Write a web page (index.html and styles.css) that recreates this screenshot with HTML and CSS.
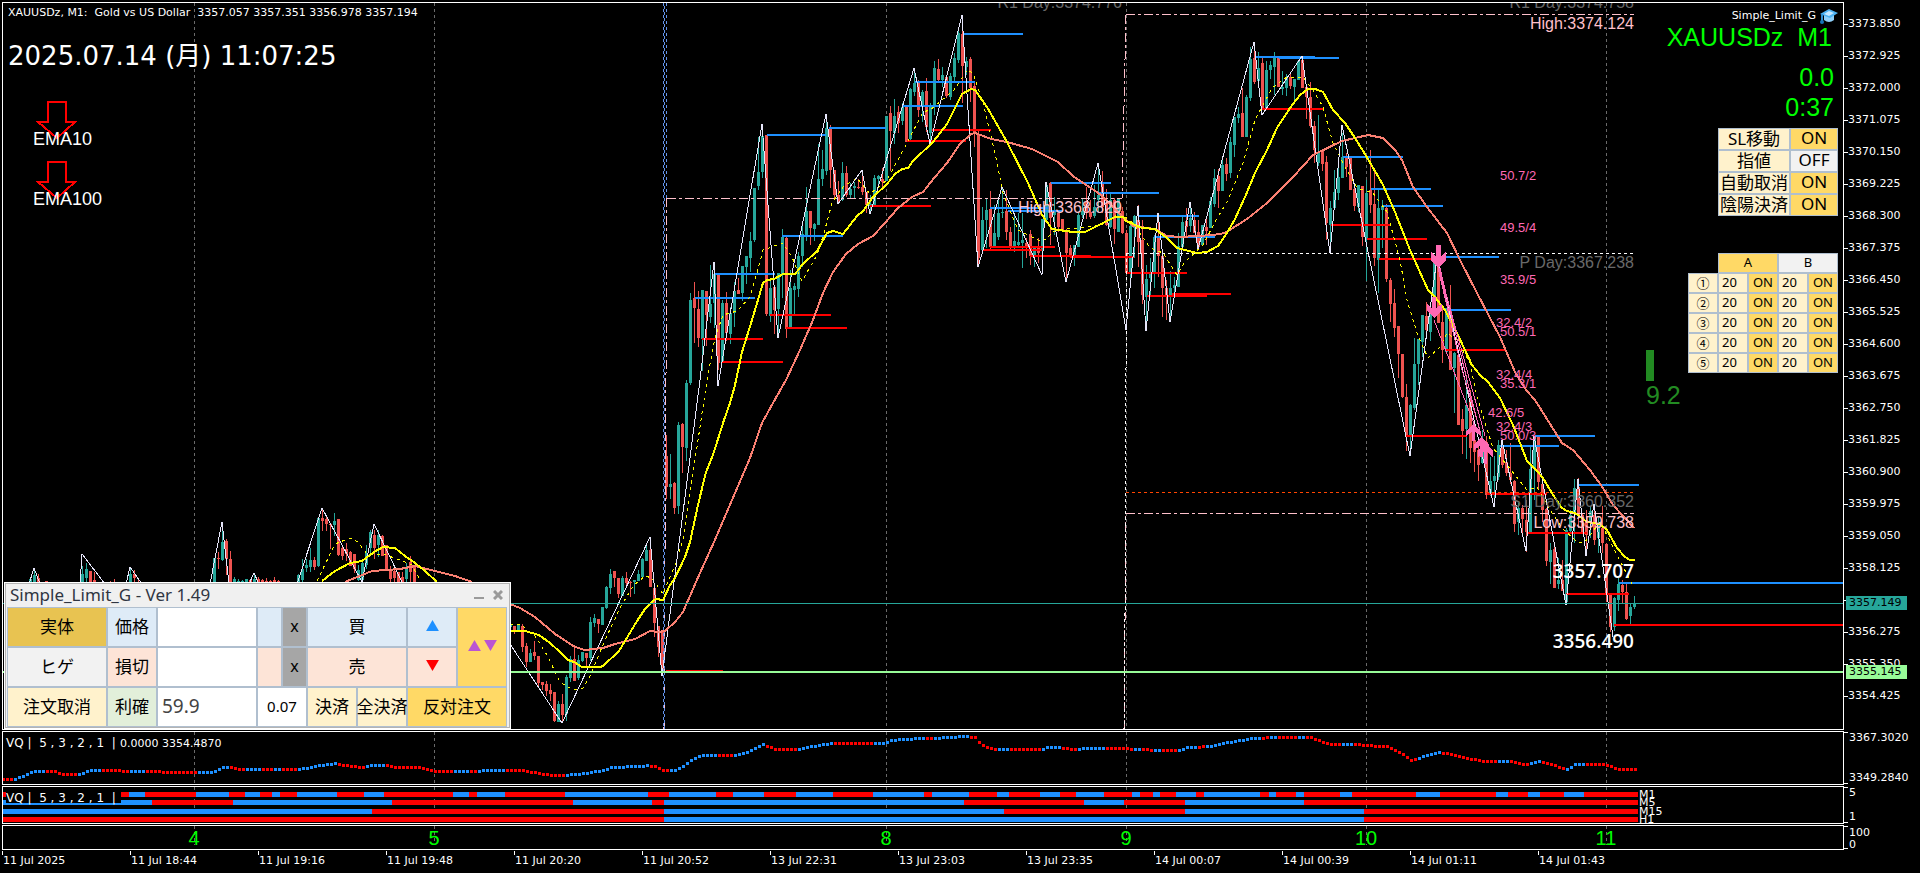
FILE: index.html
```html
<!DOCTYPE html>
<html lang="ja">
<head>
<meta charset="utf-8">
<title>XAUUSDz, M1</title>
<link rel="stylesheet" href="styles.css">
</head>
<body>
<main class="terminal">
  <section class="panel panel-price" aria-label="Price chart">
    <svg class="canvas" aria-hidden="true">
      <g transform="translate(-3 -3)">
        <g id="grid"></g>
        <g id="candles"></g>
        <g id="levels"></g>
        <g class="pivots">
          <path class="pink" d="M1126 14.5H1634M667 198.5H1122L1126 14M667 198L664 729M1126 513.5H1634M1124 729L1126 514"/>
          <path class="white" d="M1126 253.5H1634M1126.5 253L1124.5 729"/>
          <path class="orange" d="M1126 492.5H1634"/>
          <path class="session" d="M663.5 3V729M666.5 3V198"/>
          <path class="session shifted" d="M664.5 3V729"/>
        </g>
        <g id="averages"></g>
        <line class="bid" x1="3" x2="1843" y1="603.5" y2="603.5"/>
        <line class="position" x1="3" x2="1843" y1="672" y2="672"/>
        <g class="trades">
          <path d="M1434 320L1478 434M1439 268L1485 436M1440 268L1451 315L1482 440M1438 268L1462 370L1480 430M1439 268L1449 312"/>
          <path class="mark" d="M1436 245h5v11l5-4v8l-8 8-7-8v-8l5 4zM1432 297h4v11l6-4v6l-8 8-7-8v-6l5 4zM1472 441v-9l-6 4v-5l7-7 8 7v5l-6-4v9zM1480 457v-11l-6 4v-5l7-8 8 8v5l-6-4v11zM1484 464v-12l-6 5v-6l7-9 8 9v6l-6-5v12z"/>
        </g>
        <g class="ema-arrows">
          <path d="M48 101.500H66V122H75L57 138L38 122H48Z"/>
          <path d="M48 161.500H66V182H75L57 198L38 182H48Z"/>
        </g>
        <rect class="spread-bar" x="1646" y="350" width="8" height="31"/>

        <text class="t-small" x="8" y="16" xml:space="preserve">XAUUSDz, M1:  Gold vs US Dollar  3357.057 3357.351 3356.978 3357.194</text>
        <text class="t-clock" x="8" y="65">2025.07.14 (月) 11:07:25</text>
        <text class="t-ema" x="33" y="145">EMA10</text>
        <text class="t-ema" x="33" y="205">EMA100</text>
        <g class="t-pivot">
          <text class="gray" x="1122" y="8">R1 Day:3374.776</text>
          <text class="gray" x="1634" y="8">R1 Day:3374.758</text>
          <text class="pinkish" x="1634" y="29">High:3374.124</text>
          <text class="pinkish" x="1122" y="213">High:3368.829</text>
          <text class="gray" x="1634" y="268">P Day:3367.238</text>
          <text class="gray" x="1634" y="507">S1 Day:3360.352</text>
          <text class="pinkish" x="1634" y="528">Low:3359.738</text>
        </g>
        <g class="t-trade">
          <text x="1500" y="180">50.7/2</text>
          <text x="1500" y="232">49.5/4</text>
          <text x="1500" y="284">35.9/5</text>
          <text x="1496" y="327">32.4/2</text>
          <text x="1500" y="336">50.5/1</text>
          <text x="1496" y="379">32.4/4</text>
          <text x="1500" y="388">35.3/1</text>
          <text x="1488" y="417">42.6/5</text>
          <text x="1496" y="431">32.4/3</text>
          <text x="1500" y="440">50.0/3</text>
        </g>
        <text class="t-price" x="1634" y="578">3357.707</text>
        <text class="t-price" x="1634" y="648">3356.490</text>
        <text class="t-spread" x="1646" y="404">9.2</text>
      </g>
    </svg>

    <aside class="status">
      <p class="expert">Simple_Limit_G
        <svg class="cap" viewBox="0 0 18 15" aria-hidden="true"><path d="M4 6v5q5 4 10 0V6z" fill="#8fd0fa"/><path d="M0 5L9 0l9 4-8 5z" fill="#4db2f2"/><path d="M4 5l5-3 5 2-5 3z" fill="#c5e8ff"/><path d="M2 5v7" stroke="#2f8ed0" stroke-width="2"/><circle cx="2" cy="13" r="2" fill="#1674b8"/></svg>
      </p>
      <p class="symbol">XAUUSDz&nbsp; M1</p>
      <p class="gain">0.0</p>
      <p class="count">0:37</p>
      <div class="switches">
        <button class="cream">SL移動</button><button class="gold">ON</button>
        <button class="cream">指値</button><button class="plain">OFF</button>
        <button class="cream">自動取消</button><button class="gold">ON</button>
        <button class="cream">陰陽決済</button><button class="gold">ON</button>
      </div>
      <div class="slots">
        <button class="gold head-a">A</button><button class="plain head-b">B</button>
        <button class="cream num">①</button><input aria-label="A1" value="20"><button class="gold">ON</button><input aria-label="B1" value="20"><button class="gold">ON</button>
        <button class="cream num">②</button><input aria-label="A2" value="20"><button class="gold">ON</button><input aria-label="B2" value="20"><button class="gold">ON</button>
        <button class="cream num">③</button><input aria-label="A3" value="20"><button class="gold">ON</button><input aria-label="B3" value="20"><button class="gold">ON</button>
        <button class="cream num">④</button><input aria-label="A4" value="20"><button class="gold">ON</button><input aria-label="B4" value="20"><button class="gold">ON</button>
        <button class="cream num">⑤</button><input aria-label="A5" value="20"><button class="gold">ON</button><input aria-label="B5" value="20"><button class="gold">ON</button>
      </div>
    </aside>

    <section class="dialog" aria-label="Simple_Limit_G">
      <header class="dialog-bar">
        <h1>Simple_Limit_G - Ver 1.49</h1>
        <button class="tool" aria-label="Minimize"><svg viewBox="0 0 10 10"><path d="M0 8h10" stroke="#9a9a9a" stroke-width="2"/></svg></button>
        <button class="tool" aria-label="Close"><svg viewBox="0 0 10 10"><path d="M1 1l8 8M9 1l-8 8" stroke="#9a9a9a" stroke-width="3"/></svg></button>
      </header>
      <div class="order">
        <button class="amber">実体</button><button class="sky">価格</button><input aria-label="価格"><button class="sky" aria-label="買オプション"></button><button class="dim">x</button><button class="sky wide">買</button><button class="sky" aria-label="Up"><svg class="tri" viewBox="0 0 14 12"><path d="M7 0l7 12H0z" fill="#1e90ff"/></svg></button><button class="gold both" aria-label="Both"><svg class="tri" viewBox="0 0 14 12"><path d="M7 0l7 12H0z" fill="#ba55d3"/></svg><svg class="tri" viewBox="0 0 14 12"><path d="M0 0h14L7 12z" fill="#ba55d3"/></svg></button>
        <button class="plain">ヒゲ</button><button class="rose">損切</button><input aria-label="損切"><button class="rose" aria-label="売オプション"></button><button class="dim">x</button><button class="rose wide">売</button><button class="rose" aria-label="Down"><svg class="tri" viewBox="0 0 14 12"><path d="M0 0h14L7 12z" fill="#ff0000"/></svg></button>
        <button class="cream">注文取消</button><button class="mint">利確</button><input aria-label="利確" value="59.9"><input class="lot wide" aria-label="Lot" value="0.07"><button class="cream">決済</button><button class="cream">全決済</button><button class="gold wide">反対注文</button>
      </div>
    </section>
  </section>

  <div class="scale scale-price">
    <ol id="prices"></ol>
    <span class="tag tag-bid">3357.149</span>
    <span class="tag tag-position">3355.145</span>
  </div>

  <section class="panel" aria-label="VQ">
    <svg class="canvas" aria-hidden="true">
      <g transform="translate(-3 -732)">
        <g id="grid-vq"></g>
        <g id="dots"></g>
        <text class="t-label" x="6" y="747" xml:space="preserve">VQ |  5 , 3 , 2 , 1  |</text>
        <text class="t-small" x="120" y="747">0.0000 3354.4870</text>
      </g>
    </svg>
  </section>
  <div class="scale ends"><span>3367.3020</span><span>3349.2840</span></div>

  <section class="panel" aria-label="VQ multi timeframe">
    <svg class="canvas" aria-hidden="true">
      <g transform="translate(-3 -787)">
        <g id="grid-mtf"></g>
        <g id="bars"></g>
        <rect x="6" y="788" width="115" height="15" fill="#000"/>
        <text class="t-label" x="6" y="802" xml:space="preserve">VQ |  5 , 3 , 2 , 1  |</text>
        <g class="t-small">
          <text x="1639" y="798">M1</text><text x="1639" y="806">M5</text><text x="1639" y="815">M15</text><text x="1639" y="823">H1</text>
        </g>
      </g>
    </svg>
  </section>
  <div class="scale ends"><span>5</span><span>1</span></div>

  <section class="panel" aria-label="Hours">
    <svg class="canvas" aria-hidden="true">
      <g transform="translate(-3 -826)">
        <g id="grid-hours"></g>
        <g class="t-hour">
          <text x="194" y="845">4</text><text x="434" y="845">5</text><text x="886" y="845">8</text>
          <text x="1126" y="845">9</text><text x="1366" y="845">10</text><text x="1606" y="845">11</text>
        </g>
      </g>
    </svg>
  </section>
  <div class="scale ends tight"><span>100</span><span>0</span></div>

  <ol class="times">
    <li>11 Jul 2025</li><li>11 Jul 18:44</li><li>11 Jul 19:16</li><li>11 Jul 19:48</li><li>11 Jul 20:20</li><li>11 Jul 20:52</li><li>13 Jul 22:31</li><li>13 Jul 23:03</li><li>13 Jul 23:35</li><li>14 Jul 00:07</li><li>14 Jul 00:39</li><li>14 Jul 01:11</li><li>14 Jul 01:43</li>
  </ol>
</main>
<script src="chart.js"></script>
</body>
</html>
```

FILE: styles.css
```css
* { box-sizing: border-box; }
body { margin: 0; background: #000; color: #fff; font: 11px/14px "DejaVu Sans", "Noto Sans CJK JP", sans-serif; }
p, ol, h1 { margin: 0; padding: 0; list-style: none; }

.terminal {
  display: grid;
  grid-template-columns: minmax(0, 1fr) 76px;
  grid-template-rows: minmax(0, 1fr) 54px 38px 25px 22px;
  row-gap: 1px;
  height: 100vh;
  padding: 2px 0 0 2px;
}
.panel { position: relative; border: 1px solid #fff; overflow: hidden; }
.canvas { display: block; width: 100%; height: 100%; shape-rendering: crispEdges; }

/* chart lines */
.grid-line { stroke: #6a6a6a; stroke-dasharray: 3 3; fill: none; }
.up { fill: #26a69a; }
.down { fill: #ef5350; }
.level { stroke-width: 2; }
.level.high { stroke: #1e90ff; }
.level.low { stroke: #f00; }
.avg { fill: none; stroke-width: 2; }
.avg.fast { stroke: #ff0; stroke-width: 1; stroke-dasharray: 3 4; }
.avg.mid { stroke: #ff0; }
.avg.slow { stroke: #fa8072; }
.avg.zigzag { stroke: #e6e6fa; stroke-width: 1; }
.pivots path { fill: none; stroke-dasharray: 3 3; }
.pivots .pink { stroke: #ffc0cb; stroke-dasharray: 9 3 3 3; }
.pivots .white { stroke: #fff; }
.pivots .orange { stroke: #ff4500; }
.pivots .session { stroke: #6495ed; }
.pivots .shifted { stroke-dashoffset: 3; }
.bid { stroke: #26a69a; }
.position { stroke: #98fb98; stroke-width: 2; }
.trades path { fill: none; stroke: #ff69b4; }
.trades .mark { fill: #ff69b4; stroke: none; }
.ema-arrows path { fill: none; stroke: #f00; stroke-width: 2; }
.spread-bar { fill: #228b22; }
.blue { fill: #1e90ff; }
.red { fill: #f00; }

/* chart text */
.t-small { font-size: 11px; fill: #fff; }
.t-label { font-size: 12px; fill: #fff; }
.t-clock { font-size: 26px; fill: #fff; }
.t-ema { font: 18px "Liberation Sans", sans-serif; fill: #fff; }
.t-pivot { font: 16px "Liberation Sans", sans-serif; text-anchor: end; }
.t-pivot .gray { fill: #696969; }
.t-pivot .pinkish { fill: #ffc0cb; }
.t-trade { font: 13px "Liberation Sans", sans-serif; fill: #ff69b4; }
.t-price { font: 600 19px "Open Sans", sans-serif; fill: #fff; text-anchor: end; }
.t-spread { font: 25px "Liberation Sans", sans-serif; fill: #228b22; }
.t-hour { font: 20px "Liberation Sans", sans-serif; fill: #0f0; text-anchor: middle; }

/* scales */
.scale { position: relative; overflow: hidden; }
.scale-price ol { padding-top: 15px; }
.scale-price li { height: 32px; padding-left: 4px; position: relative; }
.scale-price li::before { content: ""; position: absolute; left: 0; top: 7px; width: 4px; height: 1px; background: #fff; }
.tag { position: absolute; left: 2px; width: 61px; padding-left: 3px; color: #000; }
.tag-bid { top: 594px; background: #26a69a; }
.tag-position { top: 663px; background: #98fb98; }
.ends { display: flex; flex-direction: column; justify-content: space-between; padding-left: 4px; }
.ends::before { content: ""; position: absolute; left: 0; top: 1px; bottom: 1px; width: 4px; border: solid #fff; border-width: 1px 0; }
.ends span { padding-left: 1px; }
.tight { line-height: 11px; padding-top: 2px; }
.times { grid-column: 1 / -1; display: flex; }
.times li { flex: 0 0 128px; height: 4px; padding-top: 3px; border-left: 1px solid #fff; }

/* controls */
button, input { margin: 0; padding: 0 0 3px; min-width: 0; border: 1px solid #b0bfcf; border-radius: 0; background: #fff; color: #000; font: 17px "Noto Sans", "Noto Sans CJK JP", sans-serif; white-space: nowrap; }
button { display: flex; align-items: center; justify-content: center; }
.gold { background: #ffd966; }
.amber { background: #e8c351; }
.cream { background: #fff2cc; }
.plain { background: #f2f2f2; }
.sky { background: #deebf7; }
.rose { background: #fde4d7; }
.mint { background: #e2efda; }
.dim { background: #a6a6a6; font-size: 16px; }

.status { position: absolute; top: 5px; right: 5px; display: flex; flex-direction: column; align-items: flex-end; font: 25px/30px "Liberation Sans", sans-serif; color: #0f0; }
.expert { display: flex; align-items: center; gap: 4px; color: #fff; font: 11px/16px "DejaVu Sans", sans-serif; }
.cap { width: 18px; height: 15px; }
.symbol { padding-right: 6px; line-height: 26px; }
.gain { padding: 12px 4px 0 0; }
.count { padding-right: 4px; }
.switches { display: grid; grid-template-columns: 72px 48px; grid-auto-rows: 22px; margin-top: 6px; }
.slots { display: grid; grid-template-columns: repeat(5, 30px); grid-auto-rows: 20px; margin-top: 37px; }
.slots button, .slots input { font-size: 13px; padding-bottom: 2px; }
.slots input { background: #fff2cc; padding-left: 3px; }
.head-a { grid-column: 2 / span 2; }
.head-b { grid-column: span 2; }

.dialog { position: absolute; left: 1px; bottom: 0; width: 507px; padding: 0 2px 1px; background: #f0f0f0; border: 1px solid #fff; outline: 1px solid #b4b4b4; outline-offset: -2px; }
.dialog-bar { display: flex; align-items: center; gap: 9px; height: 24px; padding: 0 5px 0 3px; }
.dialog-bar h1 { flex: 1; color: #2f3542; font: 17px/22px "Noto Sans", sans-serif; }
.tool { border: 0; padding: 0; background: none; }
.tool svg { width: 10px; height: 10px; }
.order { display: grid; grid-template-columns: 100px 50px 100px 25px 25px repeat(4, 50px); grid-template-rows: repeat(3, 40px); }
.wide { grid-column: span 2; }
.both { grid-row: span 2; gap: 3px; }
.order input { font-size: 19px; padding-left: 4px; color: #444; }
.order .lot { font-size: 15px; padding-left: 0; text-align: center; color: #000; }
.tri { width: 13px; height: 11px; }
```

FILE: chart.js
```js
const NS = "http://www.w3.org/2000/svg";
const STEP = 4;
const byId = (id) => document.getElementById(id);

function add(parent, tag, attrs) {
  const el = document.createElementNS(NS, tag);
  for (const k in attrs) el.setAttribute(k, attrs[k]);
  parent.appendChild(el);
}

/* hour separators */
const HOURS = [194, 434, 886, 1126, 1366, 1606];
for (const [id, top, bottom] of [["grid", 3, 729], ["grid-vq", 732, 784], ["grid-mtf", 787, 823], ["grid-hours", 826, 845]]) {
  for (const x of HOURS) add(byId(id), "path", { class: "grid-line", d: `M${x + 0.5} ${top}V${bottom}` });
}

/* runs of bars: first x, then "direction high top bottom low" per bar */
const RUNS = [
  [30, "u 579 579 590 590,u 569 575 590 590,d 574 578 590 590,u 582 582 590 590,d 581 581 590 590"],
  [82, "u 566 574 590 590,u 563 569 578 582,d 571 571 582 590,d 572 580 590 590"],
  [110, "d 581 583 590 590,d 579 583 590 590"],
  [130, "u 567 574 590 590,d 570 574 578 590,d 580 582 590 590"],
  [214, "u 558 558 590 590,d 552 558 559 569,u 528 542 560 561,d 539 541 559 575,d 551 559 590 590,u 577 579 590 590,u 579 581 590 590,u 580 581 590 590,u 579 579 590 590,d 579 580 590 590,u 574 579 590 590,d 577 579 590 590,d 579 580 590 590,d 578 581 590 590,d 580 581 590 590,d 577 580 590 590,d 580 581 590 590"],
  [298, "u 574 575 590 590,u 559 569 580 590,u 559 565 568 572,u 548 560 567 572,d 557 560 567 570,u 518 518 566 567,d 508 518 521 531,d 516 519 524 531,d 524 524 525 549,u 513 521 525 536,d 519 519 555 556,d 547 548 556 560,d 543 549 554 561,d 551 552 566 566,d 554 554 569 573,u 565 570 580 581,u 562 563 580 581,u 545 553 565 569,u 530 532 548 556,d 530 535 548 559,u 530 535 545 557,d 535 536 556 556,d 545 545 569 570,d 566 569 579 582,d 566 571 578 582,d 572 572 590 590,d 572 577 590 590,u 563 567 579 582,d 556 562 572 582,d 566 567 582 590"],
  [510, "u 624 624 627 627,d 626 626 630 634,u 624 625 630 630,d 624 626 647 652,d 643 646 662 667,u 649 653 662 662,d 641 652 656 660,d 656 656 683 687,d 682 682 685 690,d 681 684 691 696,d 684 690 694 701,d 692 692 721 722,u 701 704 722 722,d 694 704 715 723,u 675 677 714 721,u 656 659 678 682,d 647 659 681 681,u 655 660 678 680,u 652 652 661 662,d 653 653 658 666,u 617 622 658 661,u 614 618 623 627,d 619 619 624 633,u 607 607 625 625,u 586 587 608 609,u 569 574 588 594,d 571 571 578 587,d 578 578 594 598,u 576 578 596 596,d 572 578 583 585,d 581 582 583 597,u 580 580 582 594,u 570 574 581 581,u 558 559 577 577,u 546 550 561 561,d 538 550 587 587,d 588 588 623 637,d 626 626 647 657,d 630 630 672 676,d 435 456 487 499,u 454 484 487 499,d 482 483 508 514,u 422 425 506 514,d 423 424 447 473,u 380 383 448 461,u 293 300 383 385"],
  [694, "d 282 298 308 343,d 291 309 338 347,u 290 290 339 371,d 291 291 315 346,u 265 304 317 323,u 262 274 303 328,d 274 274 363 370,u 300 303 362 363,d 292 303 333 341,u 307 313 334 344,u 282 291 313 327,d 278 290 294 294,u 266 266 293 301,u 256 256 267 284,u 232 241 258 272,u 188 188 240 242,u 137 172 186 190,u 124 136 172 178,d 135 135 314 316,u 281 288 316 322,d 287 287 310 334,u 273 273 309 337,u 229 237 274 298,d 236 238 329 338,u 270 288 328 328,u 283 286 290 315,u 252 256 289 297,u 223 234 256 267,u 187 211 236 241,d 211 211 228 245,u 223 224 229 241,u 144 179 225 225,u 150 169 179 186,u 114 128 171 175,d 125 128 170 188,d 170 170 195 200,d 181 195 202 204,u 162 173 200 201,d 166 173 195 197,u 183 189 195 199,u 182 186 188 199,d 179 187 188 189,d 170 187 192 195,d 192 192 205 213,u 195 204 206 214,u 175 178 206 206,u 175 176 179 187,d 168 179 182 187,u 116 116 181 181,d 106 113 131 171"],
  [894, "u 99 116 133 144,d 106 112 123 133,u 103 107 121 125,d 106 107 142 142,u 88 89 139 141,u 68 83 92 96,d 80 83 110 117,u 90 92 107 122,d 78 91 127 132,u 103 105 133 143,u 61 68 107 115,d 59 69 80 81,u 67 75 80 87,d 75 77 96 98,u 73 76 97 100,u 53 58 77 82,u 28 33 60 63,d 15 34 66 103,u 57 61 67 75,d 57 59 88 102,d 82 86 133 147,d 129 135 258 267,u 207 220 250 250,u 199 210 220 248,d 191 209 247 251,u 205 233 247 247,u 200 213 237 240,u 187 212 213 218,d 190 211 232 240,d 227 232 247 251,u 213 241 247 252,u 213 242 245 247,u 213 240 243 268,d 238 243 247 258,d 230 234 256 265,u 247 248 257 267,d 238 248 253 263,u 219 219 249 273,u 182 185 220 220,d 182 183 218 245,u 197 211 215 235,d 213 213 227 232,d 219 219 230 231,d 229 230 253 282,d 245 248 256 257,u 245 245 258 266,u 213 215 247 247,u 198 211 215 218,d 187 202 212 219,d 200 212 217 219,u 185 207 216 218,u 163 195 200 213"],
  [1102, "d 171 182 207 213,d 189 203 225 226,u 193 200 227 228,d 198 200 229 244,u 198 199 232 232,d 207 211 233 234,d 230 233 273 274,u 225 226 272 281,u 215 216 228 258,d 205 220 242 267,d 220 240 295 304,u 265 279 297 328,u 258 272 278 295,u 235 237 272 288,d 213 237 256 277,d 255 256 288 317,d 280 288 296 320,u 271 288 295 322,u 277 285 288 297,u 233 246 287 287,u 217 222 247 247,d 208 221 227 237,u 203 218 226 232,d 212 220 233 233,d 220 232 247 249,u 225 225 245 245,d 218 227 231 245,u 197 201 228 228,u 169 178 204 207,d 169 176 191 208,u 158 165 191 191,d 158 164 174 181,u 137 142 173 178,u 117 117 145 157,u 107 114 118 123,d 88 113 137 137,u 95 97 137 137,u 47 59 98 101,d 42 58 82 84,u 52 68 81 87,d 57 63 109 109,u 61 70 108 108,u 61 65 70 79,u 52 58 67 95,d 57 57 87 87,u 71 87 89 95,u 74 77 88 96,d 73 77 86 89,u 79 79 87 102,u 60 61 80 80,d 56 60 88 88,d 85 87 97 119,d 82 97 126 128,d 121 126 150 163,u 115 152 163 166,d 150 151 164 171,d 156 162 223 240,u 201 208 225 248,u 170 192 208 209,u 167 177 193 200,u 133 157 178 178,d 153 157 167 177,d 157 157 190 190,d 183 189 206 211,u 185 185 207 212,d 186 186 237 246,u 180 193 238 281,d 150 190 205 213,d 172 204 258 266,u 190 208 260 293,u 200 206 210 248,d 204 208 279 282,d 278 280 304 322,d 289 303 328 337,d 326 326 354 378,d 354 354 397 398"],
  [1406, "d 384 397 435 451,u 404 405 435 455,u 338 364 408 410,u 339 339 364 385,u 315 315 342 357,d 302 316 330 333,u 302 315 332 341,u 260 263 315 316,d 253 263 323 323,d 308 322 350 363,u 308 308 352 352,d 285 310 370 370,u 352 353 368 413,d 355 355 425 425,d 409 419 431 454,u 380 405 429 459,d 390 400 448 463,d 430 440 452 472,d 440 450 465 481,u 430 443 463 464,d 436 442 495 499,u 457 481 495 496,u 456 476 481 506,u 440 445 477 480,d 439 447 465 468,d 450 462 473 476,d 443 473 480 484,d 480 481 524 532,u 503 508 522 535,d 505 508 519 533,d 500 520 532 552,u 447 469 532 532,u 436 437 468 500,d 436 437 482 489,d 476 484 510 522,d 508 509 561 566,u 543 550 562 584,d 543 549 588 588,u 558 580 584 589,d 560 580 591 591,u 528 530 602 605,u 510 515 531 532,u 479 488 513 543,d 478 487 516 528,d 513 515 532 533,d 510 520 535 556,u 506 511 523 538,d 506 515 540 545,u 517 525 538 553,d 506 528 543 553,d 543 544 595 602,d 594 595 627 632,u 597 598 627 631,u 578 584 600 611,d 580 585 592 604,d 582 592 619 620,u 604 607 616 624,u 596 603 607 609"],
];
for (const [start, text] of RUNS) {
  text.split(",").forEach((bar, i) => {
    const [dir, high, top, bottom, low] = bar.split(" ");
    const x = start + i * STEP;
    const cls = dir === "u" ? "up" : "down";
    add(byId("candles"), "rect", { class: cls, x, y: high, width: 1, height: Math.max(1, low - high) });
    add(byId("candles"), "rect", { class: cls, x: x - 1, y: top, width: 3, height: Math.max(1, bottom - top) });
  });
}

/* swing levels: y, from, to */
const HIGHS = [[135,767,826],[128,829,886],[236,782,843],[274,715,775],[298,695,755],[34,963,1023],[82,915,975],[106,902,963],[183,1051,1111],[193,1099,1159],[208,990,1048],[211,1008,1063],[216,1139,1199],[237,1154,1215],[57,1255,1315],[58,1279,1339],[157,1343,1403],[189,1371,1431],[206,1382,1443],[257,1440,1499],[310,1450,1511],[436,1535,1595],[446,1500,1559],[485,1579,1639],[583,1619,1843]];
const LOWS = [[315,770,831],[328,786,847],[339,702,763],[362,722,783],[206,870,931],[130,932,991],[141,907,966],[247,990,1055],[250,983,1042],[256,1030,1091],[257,1070,1134],[273,1127,1187],[296,1147,1207],[294,1172,1231],[109,1262,1323],[225,1331,1391],[239,1367,1427],[259,1379,1434],[350,1446,1506],[436,1406,1467],[494,1487,1547],[533,1528,1587],[594,1566,1629],[625,1614,1843],[671,666,723]];
for (const [list, cls] of [[HIGHS, "high"], [LOWS, "low"]]) {
  for (const [y, a, b] of list) add(byId("levels"), "path", { class: `level ${cls}`, d: `M${a} ${y}H${b}` });
}

/* averages and swings */
const LINES = [
  ["fast", "317,581 335,544 350,538 358,542 367,554 383,554 400,560 412,565 420,580"],
  ["fast", "510,625 520,624 535,636 547,655 560,682 573,690 583,688 590,676 605,640 620,608 633,586 645,576 652,578 663,594 675,565 683,540 690,490 697,447 707,380 715,338 723,315 737,311 750,297 757,273 763,250 783,243 792,257 802,281 817,255 824,233 832,203 843,187 857,178 870,194 887,180 907,143 923,112 930,110 954,90 967,70 973,73 983,103 995,153 1003,193 1018,230 1042,242 1056,230 1077,228 1101,225 1120,213 1133,223 1150,248 1163,253 1177,275 1185,262 1203,245 1215,222 1228,200 1243,163 1255,120 1272,88 1287,77 1303,77 1313,90 1323,107 1333,143 1345,167 1357,188 1373,193 1387,212 1400,260 1407,300 1417,333 1428,358 1440,347 1447,333 1457,340 1470,363 1477,397 1493,448 1507,465 1527,490 1537,487 1550,510 1562,528 1577,542 1585,542 1600,522 1613,547 1632,584"],
  ["zigzag", "29,584 34,568 40,584"], ["zigzag", "80,584 82,554 105,584"], ["zigzag", "126,584 130,567 142,584"],
  ["zigzag", "210,584 222,522 229,584"], ["zigzag", "249,584 254,573 259,584"], ["zigzag", "297,584 322,508 362,582 374,524 402,582"],
  ["zigzag", "510,644 562,723 650,537 662,676 700,380 714,262 718,386 762,124 778,338 826,114 838,204 862,170 870,214 914,68 930,144 962,15 978,267 1002,187 1042,275 1046,182 1066,282 1098,163 1126,330 1138,206 1146,331 1158,213 1170,322 1190,202 1198,249 1254,42 1262,115 1302,56 1330,253 1342,125 1410,456 1437,258 1494,507 1502,440 1526,551 1534,436 1566,605 1578,479 1586,556 1594,504 1613,637"],
  ["slow", "345,582 372,571 400,569 415,566 435,571 455,576 472,582"],
  ["slow", "510,604 520,608 535,617 555,634 575,647 585,650 603,648 615,644 635,639 650,631 658,632 665,631 675,622 683,612 700,573 714,542 720,528 735,493 750,458 762,423 773,403 786,380 800,350 813,320 823,293 833,272 846,254 858,244 873,236 885,223 898,208 912,197 923,192 935,177 947,163 960,144 971,134 975,133 991,139 1007,142 1032,149 1058,162 1073,176 1101,195 1126,220 1133,226 1155,229 1167,236 1180,237 1213,235 1225,233 1247,219 1267,203 1293,177 1313,155 1342,141 1368,135 1383,138 1395,150 1402,160 1413,187 1427,207 1447,233 1460,260 1477,293 1500,337 1515,372 1526,390 1535,400 1562,443 1573,450 1590,470 1603,488 1613,505 1634,528"],
  ["mid", "322,581 335,571 350,563 362,561 374,552 383,547 395,548 405,556 415,563 425,571 437,582"],
  ["mid", "510,631 525,631 539,635 550,643 560,652 568,660 574,662 582,667 600,667 603,666 619,651 628,636 637,621 645,609 654,600 656,599 663,600 670,585 675,578 685,557 690,542 698,505 706,472 713,455 724,420 730,403 735,385 742,352 752,320 763,283 767,280 774,279 783,274 795,274 803,264 817,251 827,233 833,231 843,234 857,216 863,211 873,197 887,184 895,174 902,169 908,168 913,161 933,142 947,124 962,94 971,89 975,90 987,107 1007,142 1028,183 1042,215 1052,229 1073,232 1085,232 1101,224 1115,217 1123,217 1126,221 1142,228 1155,229 1167,238 1177,248 1197,253 1207,252 1218,246 1227,233 1235,219 1245,197 1255,173 1267,150 1277,128 1290,108 1300,95 1308,89 1315,89 1323,92 1333,110 1345,123 1355,138 1368,159 1383,185 1395,212 1410,250 1428,290 1435,297 1445,310 1457,333 1472,365 1480,375 1488,382 1500,398 1513,425 1527,461 1537,471 1543,478 1553,495 1562,508 1567,511 1575,513 1587,522 1600,524 1607,530 1617,548 1625,557 1630,560 1635,560"],
];
for (const [cls, points] of LINES) add(byId("averages"), "polyline", { class: `avg ${cls}`, points });

/* VQ series; the listed spans are blue, the rest is red */
const VQ = "3,779 14,779 20,777 32,771 55,771 59,773 67,774 80,774 88,770 155,771 171,772 212,772 222,767 231,767 237,769 300,769 320,765 335,763 351,766 363,767 369,765 386,765 398,767 420,767 435,771 478,771 484,770 522,770 539,773 555,775 565,775 584,773 604,770 612,767 640,766 648,765 654,766 663,770 675,770 686,764 694,758 703,755 734,755 750,751 762,744 775,749 801,749 807,747 830,743 885,743 889,740 901,739 926,738 954,737 962,736 975,737 980,743 987,747 995,749 1042,749 1048,747 1060,747 1071,749 1093,748 1118,748 1162,750 1179,750 1187,747 1211,746 1224,743 1252,738 1280,737 1311,737 1321,741 1329,744 1358,744 1364,745 1386,746 1398,751 1411,760 1417,759 1423,756 1437,752 1453,754 1462,757 1484,761 1509,761 1525,764 1541,761 1566,769 1570,768 1575,764 1604,764 1619,769 1640,769".split(" ").map((p) => p.split(",").map(Number));
const M1 = [[14,44],[78,100],[129,145],[196,229],[245,260],[272,280],[297,337],[364,384],[453,469],[477,505],[565,648],[669,716],[733,764],[796,833],[873,924],[932,969],[997,1009],[1040,1060],[1076,1104],[1132,1140],[1153,1160],[1176,1196],[1204,1260],[1269,1276],[1296,1304],[1340,1352],[1416,1440],[1496,1508],[1528,1540],[1564,1584]];
const isBlue = (x) => M1.some(([a, b]) => x >= a && x < b);
let seg = 0;
for (let x = 3; x < 1638; x += STEP) {
  while (VQ[seg + 1][0] <= x) seg++;
  const [x0, y0] = VQ[seg];
  const [x1, y1] = VQ[seg + 1];
  const y = Math.round(y0 + ((y1 - y0) * (x - x0)) / (x1 - x0));
  add(byId("dots"), "rect", { class: isBlue(x) ? "blue" : "red", x: x - 1, y: y - 1, width: 3, height: 3 });
}

/* trend bars for each timeframe */
const FRAMES = [
  [792, M1],
  [800, [[3,152],[233,392],[573,652],[664,964],[1084,1124],[1185,1304]]],
  [809, [[3,372],[664,1004],[1185,1364]]],
  [817, [[664,1364]]],
];
for (const [y, spans] of FRAMES) {
  add(byId("bars"), "rect", { class: "red", x: 3, y, width: 1635, height: 5 });
  for (const [a, b] of spans) add(byId("bars"), "rect", { class: "blue", x: a, y, width: b - a, height: 5 });
}

/* price scale; the row under the bid tag has a tick only */
const BID_ROW = 18;
for (let k = 0; k < 22; k++) {
  const li = document.createElement("li");
  if (k !== BID_ROW) li.textContent = (3373.85 - 0.925 * k).toFixed(3);
  byId("prices").appendChild(li);
}
```
